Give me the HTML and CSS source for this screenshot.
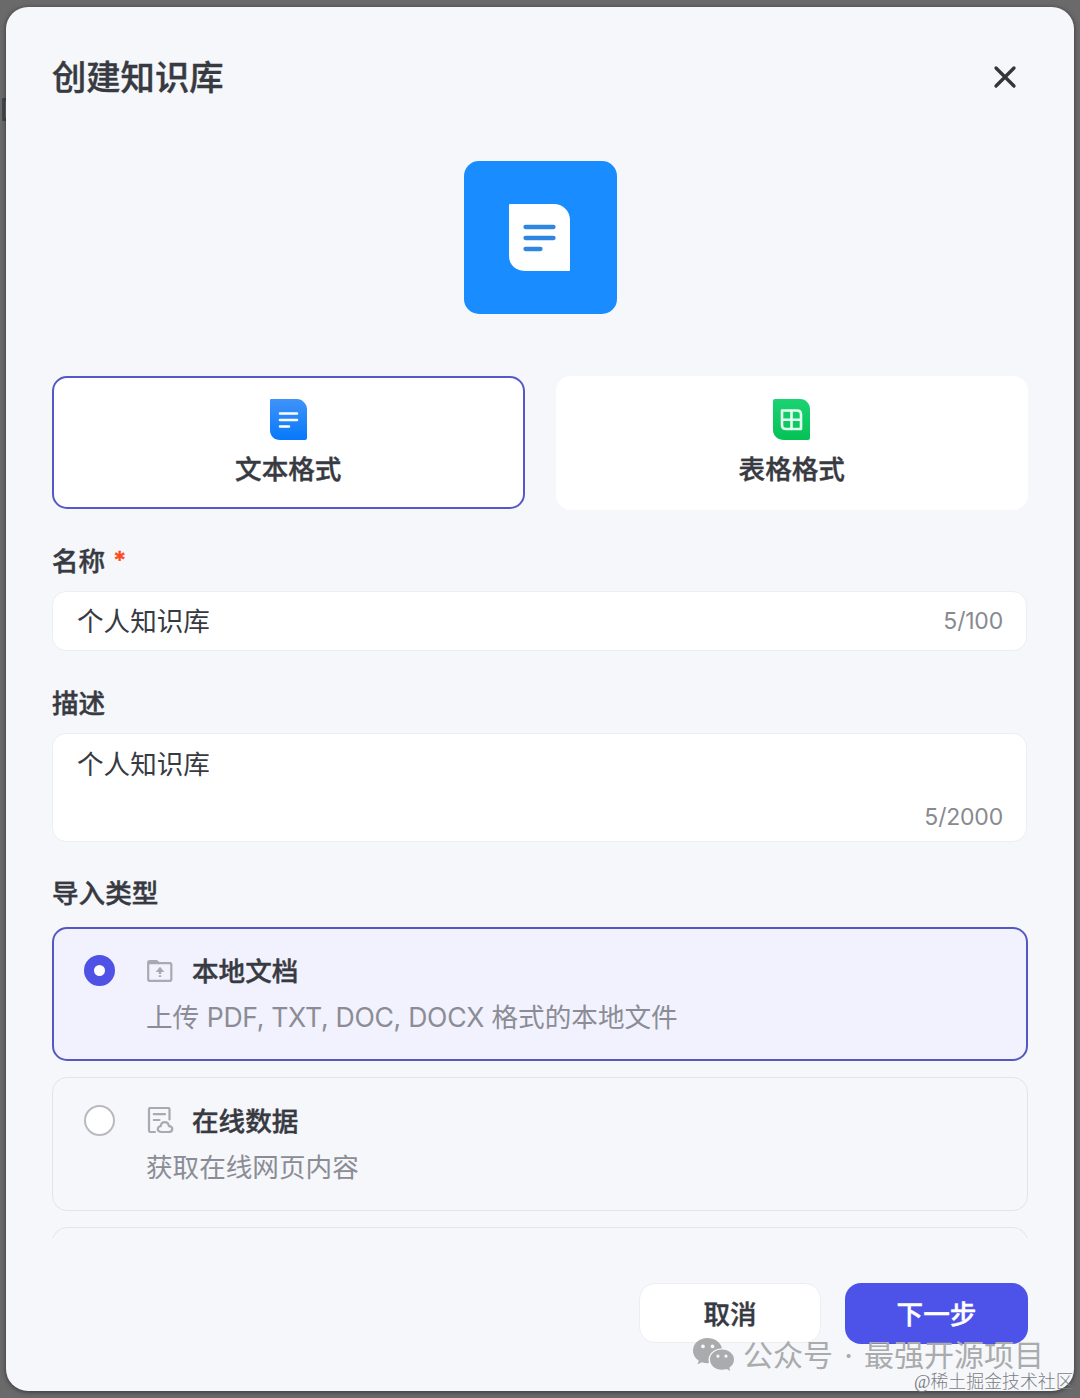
FILE: index.html
```html
<!doctype html>
<html lang="zh-CN">
  <head>
    <meta charset="utf-8">
    <title>创建知识库</title>
    <link rel="stylesheet" href="styles.css">
  </head>
  <body>
    <div class="edge-mark"></div>
    <div class="modal">
      <div class="header">
        <div class="title">创建知识库</div>
        <svg class="close" viewBox="0 0 24 24"><path d="M3 3L21 21M21 3L3 21"/></svg>
      </div>

      <div class="content">
        <div class="cover">
          <svg width="62" height="68" viewBox="0 0 62 68">
            <path fill="#fff" d="M1 0H45C54 0 61 7 61 16V66Q61 67 60 67H17C7 67 0 61 0 52V1Q0 0 1 0Z"/>
            <path class="cover-lines" d="M16.5 23H44.5M16.5 34H44.5M16.5 45H31.5"/>
          </svg>
        </div>

        <div class="formats">
          <div class="format active">
            <svg width="37" height="41" viewBox="0 0 37 41">
              <defs>
                <linearGradient id="blue" x1="0" y1="0" x2="0" y2="1">
                  <stop offset="0" stop-color="#4093f8"/>
                  <stop offset="1" stop-color="#0579fb"/>
                </linearGradient>
              </defs>
              <path fill="url(#blue)" d="M1 0H27C32 0 37 5 37 10V39Q37 41 35 41H10C4 41 0 37 0 31V1Q0 0 1 0Z"/>
              <path class="doc-lines" d="M10 14.5H27M10 21H27M10 27.5H19"/>
            </svg>
            <div class="format-name">文本格式</div>
          </div>
          <div class="format">
            <svg width="37" height="41" viewBox="0 0 37 41">
              <defs>
                <linearGradient id="green" x1="0" y1="0" x2="0" y2="1">
                  <stop offset="0" stop-color="#1cd273"/>
                  <stop offset="1" stop-color="#04c255"/>
                </linearGradient>
              </defs>
              <path fill="url(#green)" d="M2 0H27C33 0 37 5 37 10V39Q37 41 35 41H11C5 41 0 37 0 31V2Q0 0 2 0Z"/>
              <path class="grid-lines" d="M9 11.5H24Q28 11.5 28 15.5V30H13Q9 30 9 26ZM18.5 11.5V30M9 20.7H28"/>
            </svg>
            <div class="format-name">表格格式</div>
          </div>
        </div>

        <div class="label label-name">名称<span class="required">*</span></div>
        <div class="field">
          <span>个人知识库</span>
          <span class="count">5/100</span>
        </div>

        <div class="label label-desc">描述</div>
        <div class="field area">
          <span>个人知识库</span>
          <span class="count">5/2000</span>
        </div>

        <div class="label label-type">导入类型</div>
        <div class="option active">
          <div class="radio"></div>
          <div class="option-body">
            <div class="option-title">
              <svg width="28" height="28" viewBox="0 0 28 28">
                <path d="M2.2 22.5V5.5Q2.2 4 3.7 4H10.5L13 6.2H23.8Q25.3 6.2 25.3 7.7V22.3Q25.3 23.8 23.8 23.8H3.7Q2.2 23.8 2.2 22.5Z"/>
                <path fill="#a9a9b2" stroke="none" d="M3 4H10.5L13 7.3H3ZM14 9.8L18.3 15H15.2V17H12.8V15H9.7ZM12.8 18.2H15.2V20H12.8Z"/>
              </svg>
              <span>本地文档</span>
            </div>
            <div class="option-desc">上传 <span class="types">PDF, TXT, DOC, DOCX</span> 格式的本地文件</div>
          </div>
        </div>
        <div class="option">
          <div class="radio"></div>
          <div class="option-body">
            <div class="option-title">
              <svg width="28" height="28" viewBox="0 0 28 28">
                <path d="M9 25H4.3Q3 25 3 23.7V2.3Q3 1 4.3 1H22.2Q23.5 1 23.5 2.3V12.5M7.8 7.2H19M7.8 13H13.5"/>
                <path d="M15.5 25H22.3C27.5 25 27.5 19.2 22.9 19.2C22.4 13.7 14.7 13.7 14.8 19.2C10.6 19.5 10.8 25 15.5 25Z"/>
              </svg>
              <span>在线数据</span>
            </div>
            <div class="option-desc">获取在线网页内容</div>
          </div>
        </div>
        <div class="option"></div>
      </div>

      <div class="footer">
        <div class="btn cancel">取消</div>
        <div class="btn next">下一步</div>
      </div>
    </div>

    <div class="watermark">
      <svg width="42" height="34" viewBox="0 0 42 34">
        <path fill="#aaabac" fill-rule="evenodd" d="M14.5 0C6 0 0 5.7 0 12.7C0 17 2.3 20.4 5.8 22.7L4.5 26.3L9 24.3C11.3 25 13.5 25.3 16 25.1C13.8 17 20 10.6 29 10.3C27.5 4 21.3 0 14.5 0ZM10 6.5A1.9 1.9 0 1 1 9.9 10.3A1.9 1.9 0 0 1 10 6.5ZM19.5 6.5A1.9 1.9 0 1 1 19.4 10.3A1.9 1.9 0 0 1 19.5 6.5Z"/>
        <path fill="#aaabac" fill-rule="evenodd" d="M29 11.5C22 11.5 17 16 17 21.5C17 27 22 31.7 29 31.7C30.7 31.7 32.2 31.4 33.7 31L37.2 33L36.3 29.7C39.2 27.8 41 25 41 21.5C41 16 35.7 11.5 29 11.5ZM25 16.5A1.6 1.6 0 1 1 24.9 19.7A1.6 1.6 0 0 1 25 16.5ZM33 16.5A1.6 1.6 0 1 1 32.9 19.7A1.6 1.6 0 0 1 33 16.5Z"/>
      </svg>
      <span class="wm-name">公众号</span>
      <span class="wm-dot">·</span>
      <span>最强开源项目</span>
    </div>
    <div class="credit">@稀土掘金技术社区</div>
  </body>
</html>
```
FILE: styles.css
```css
* {
  box-sizing: border-box;
}

body {
  margin: 0;
  padding: 7px 6px;
  height: 1398px;
  overflow: hidden;
  background-color: #6a6a6b;
  font-family: Inter, "Noto Sans CJK SC", sans-serif;
  font-size: 26.6px;
  line-height: 40px;
  color: #383a42;
}

svg {
  display: block;
  flex: none;
  fill: none;
  stroke-linecap: round;
  stroke-linejoin: round;
}

.edge-mark {
  position: absolute;
  left: 2px;
  top: 98px;
  width: 8px;
  height: 23px;
  border: 3px solid #45474c;
}

.modal {
  position: relative;
  height: 1384px;
  padding: 0 46px;
  border-radius: 22px;
  background-color: #f5f7fb;
  box-shadow: 0 1px 5px rgba(0, 0, 0, 0.5);
}

.header {
  display: flex;
  align-items: center;
  justify-content: space-between;
  height: 140px;
}

.title {
  padding-top: 1px;
  font-size: 34.3px;
  font-weight: 500;
}

/* a bit heavier than medium, lighter than bold */
.title,
.label,
.format-name,
.option-title span,
.btn {
  -webkit-text-stroke: 0.4px;
}

.close {
  width: 24px;
  height: 24px;
  margin-right: 11px;
  stroke: #33353b;
  stroke-width: 3.3;
}

/* scroll area, cuts the third option off */
.content {
  height: 1091px;
  padding-top: 14px;
  overflow: hidden;
}

.cover {
  display: flex;
  align-items: center;
  justify-content: center;
  width: 153px;
  height: 153px;
  margin: 0 auto;
  border-radius: 15px;
  background-color: #198cff;
}

.cover-lines {
  stroke: #2f86e0;
  stroke-width: 4.3;
}

.formats {
  display: grid;
  grid-template-columns: 1fr 1fr;
  gap: 31px;
  margin-top: 62px;
}

.format {
  display: flex;
  flex-direction: column;
  align-items: center;
  height: 134px;
  padding-top: 23px;
  border-radius: 15px;
  background-color: #fff;
}

.format.active {
  height: 133px;
  padding-top: 21px;
  border: 2px solid #5558c8;
}

.format-name {
  margin-top: 9px;
  font-weight: 500;
}

.doc-lines {
  stroke: #fff;
  stroke-width: 2.6;
}

.grid-lines {
  stroke: #e4fff0;
  stroke-width: 2.6;
}

.label {
  font-weight: 500;
}

.label-name {
  margin-top: 31px;
}

.label-desc {
  margin-top: 32px;
}

.label-type {
  margin-top: 31px;
}

.required {
  position: relative;
  top: -2px;
  margin-left: 8px;
  font-size: 24px;
  font-weight: 600;
  color: #fb4a1e;
}

.field {
  display: flex;
  align-items: center;
  justify-content: space-between;
  height: 60px;
  margin: 8px 1px 0 0;
  padding: 0 23px 0 24px;
  border: 1px solid #eceef2;
  border-radius: 14px;
  background-color: #fff;
}

.field.area {
  align-items: flex-start;
  height: 109px;
  margin-top: 10px;
  padding-top: 10px;
}

.count {
  font-size: 23px;
  letter-spacing: -0.2px;
  color: #888a90;
}

.area .count {
  align-self: flex-end;
  margin-bottom: 4px;
}

.option {
  display: flex;
  height: 134px;
  margin-top: 16px;
  padding: 23px 31px;
  border: 1px solid #e2e4ea;
  border-radius: 15px;
}

.label-type + .option {
  margin-top: 14px;
}

.option.active {
  padding: 22px 30px;
  border: 2px solid #5558c0;
  background-color: #f1f2fd;
}

.radio {
  flex: none;
  width: 31px;
  height: 31px;
  margin: 4px 31px 0 0;
  border: 2px solid #b9babe;
  border-radius: 50%;
  background-color: #fff;
}

.active .radio {
  border: 10px solid #4f52e5;
}

.option-title {
  display: flex;
  align-items: center;
  gap: 17px;
  font-weight: 500;
}

.option-title svg {
  margin-right: 1px;
  stroke: #a9a9b2;
  stroke-width: 2.2;
}

.option-desc {
  margin-top: 6px;
  color: #8b8c95;
}

.types {
  letter-spacing: -0.28px;
}

.footer {
  display: flex;
  justify-content: flex-end;
  gap: 24px;
  padding-top: 45px;
}

.btn {
  height: 61px;
  border-radius: 16px;
  line-height: 62px;
  text-align: center;
  font-weight: 500;
}

.cancel {
  width: 182px;
  height: 60px;
  border: 1px solid #eceef2;
  line-height: 60px;
  background-color: #fff;
}

.next {
  width: 183px;
  background-color: #4d53e8;
  color: #fff;
}

.watermark {
  position: absolute;
  left: 693px;
  top: 1337px;
  display: flex;
  align-items: center;
  height: 36px;
  font-size: 30px;
  color: #aaabac;
  white-space: nowrap;
}

.wm-name {
  margin-left: 8px;
}

.wm-dot {
  width: 31px;
  text-align: center;
}

.credit {
  position: absolute;
  left: 914px;
  top: 1370px;
  font-family: "Liberation Serif", "Noto Sans CJK SC", serif;
  font-size: 17.9px;
  font-weight: 300;
  line-height: 24px;
  color: #7c7e82;
  white-space: nowrap;
}
```
